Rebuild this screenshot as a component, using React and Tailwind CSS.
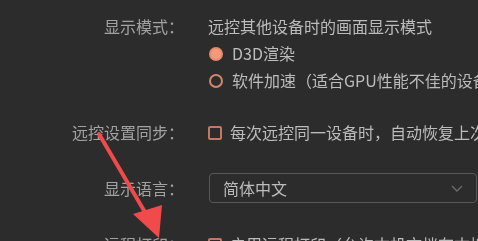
import React from "react";

function Radio({ checked }) {
  return checked ? (
    <span className="w-[14px] h-[14px] rounded-full border-[2px] border-[#e58a6b] bg-[#f39a7b] shrink-0" />
  ) : (
    <span className="w-[14px] h-[14px] rounded-full border-[2px] border-[#d2866a] bg-transparent shrink-0" />
  );
}

function Checkbox() {
  return <span className="w-[14px] h-[14px] rounded-[2px] border-[2px] border-[#c27a5e] shrink-0" />;
}

export default function App() {
  return (
    <div
      className="relative w-[478px] h-[241px] overflow-hidden bg-[#2c2c2c] text-[16px] leading-[27px] whitespace-nowrap blur-[0.4px]"
      style={{ fontFamily: '"Noto Sans CJK SC", "Noto Sans", sans-serif' }}
    >
      <div className="pt-[13px]">
        {/* Row 1 */}
        <div className="grid grid-cols-[184px_1fr] gap-x-6">
          <div className="text-right text-[#a2a2a2]">显示模式：</div>
          <div className="flex flex-col text-[#bcbcbc]">
            <div>远控其他设备时的画面显示模式</div>
            <div className="flex items-center gap-[9px] pl-[1px]">
              <Radio checked />
              <span>D3D渲染</span>
            </div>
            <div className="flex items-center gap-[9px] pl-[1px]">
              <Radio />
              <span>软件加速（适合GPU性能不佳的设备）</span>
            </div>
          </div>
        </div>

        {/* Row 2 */}
        <div className="grid grid-cols-[184px_1fr] gap-x-6 mt-[25px]">
          <div className="text-right text-[#a2a2a2]">远控设置同步：</div>
          <div className="flex items-center gap-[8px] text-[#bcbcbc]">
            <Checkbox />
            <span>每次远控同一设备时，自动恢复上次的设置</span>
          </div>
        </div>

        {/* Row 3 */}
        <div className="grid grid-cols-[184px_1fr] gap-x-6 mt-[27px] items-center">
          <div className="text-right text-[#a2a2a2]">显示语言：</div>
          <div className="ml-[1px] h-[30px] w-[268px] rounded-[4px] border border-[#585858] flex items-center justify-between pl-[13px] pr-[12px] text-[#bcbcbc]">
            <span>简体中文</span>
            <svg width="14" height="14" viewBox="0 0 14 14" fill="none">
              <path d="M2 5l5 5 5-5" stroke="#6a6a6a" strokeWidth="1.4" />
            </svg>
          </div>
        </div>

        {/* Row 4 */}
        <div className="grid grid-cols-[184px_1fr] gap-x-6 mt-[28px]">
          <div className="text-right text-[#a2a2a2]">远程打印：</div>
          <div className="flex items-center gap-[8px] text-[#bcbcbc]">
            <Checkbox />
            <span>启用远程打印（允许本机文档在本地打印）</span>
          </div>
        </div>
      </div>

      {/* Red annotation arrow */}
      <svg className="absolute left-0 top-0" width="478" height="241" viewBox="0 0 478 241">
        <line x1="99" y1="134" x2="149" y2="219" stroke="#f04a4a" strokeWidth="4" strokeLinecap="round" />
        <polygon points="133,214 162,205 159,238" fill="#f04a4a" />
      </svg>
    </div>
  );
}
